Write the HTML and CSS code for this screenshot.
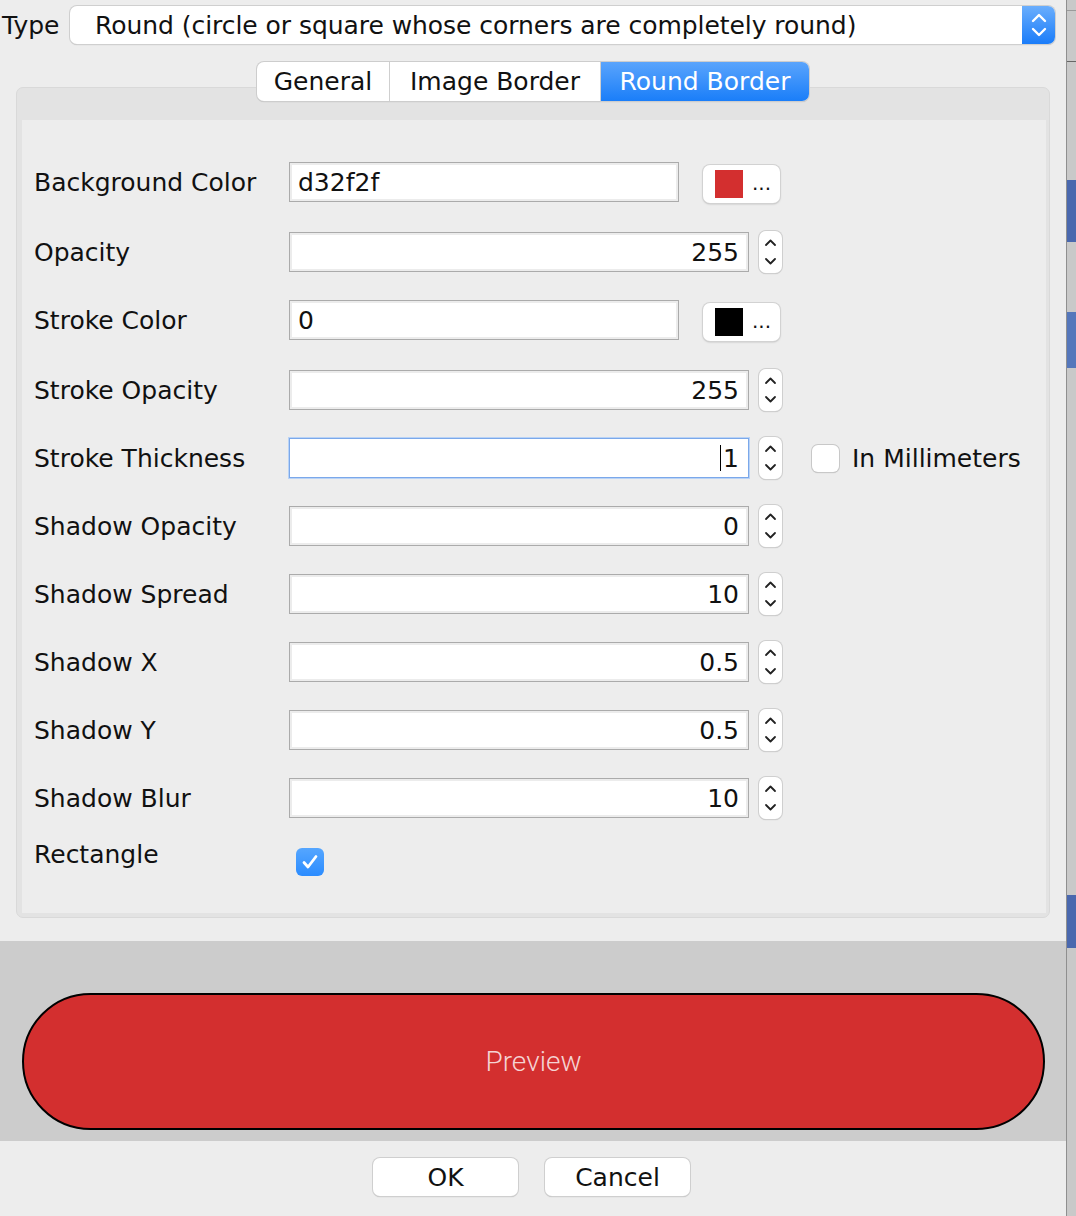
FILE: index.html
```html
<!DOCTYPE html>
<html>
<head>
<meta charset="utf-8">
<link rel="stylesheet" href="styles.css">
</head>
<body>
<div class="screen">
  <div class="dialog">
    <div class="type-row">
      <span class="type-label">Type</span>
      <div class="combo">
        <span class="combo-text">Round (circle or square whose corners are completely round)</span>
        <span class="combo-arrow">
          <svg width="18" height="26" viewBox="0 0 18 26"><path d="M3 9 L9 3 L15 9 M3 17 L9 23 L15 17" fill="none" stroke="#fff" stroke-width="2.4" stroke-linecap="round" stroke-linejoin="round"/></svg>
        </span>
      </div>
    </div>

    <div class="tabs-wrap">
      <div class="tabs">
        <div class="tab">General</div>
        <div class="tab">Image Border</div>
        <div class="tab active">Round Border</div>
      </div>
      <div class="panel">
        <div class="panel-inner">
          <div class="form-row color-row">
            <span class="label">Background Color</span>
            <div class="field short">d32f2f</div>
            <div class="color-btn"><span class="swatch red"></span><span class="dots">...</span></div>
          </div>
          <div class="form-row">
            <span class="label">Opacity</span>
            <div class="field num">255</div>
            <div class="spinner"><svg width="23" height="42" viewBox="0 0 23 42"><path d="M7 14 L11.5 9.5 L16 14 M7 28 L11.5 32.5 L16 28" fill="none" stroke="#222" stroke-width="1.8" stroke-linecap="round" stroke-linejoin="round"/></svg></div>
          </div>
          <div class="form-row color-row">
            <span class="label">Stroke Color</span>
            <div class="field short">0</div>
            <div class="color-btn"><span class="swatch black"></span><span class="dots">...</span></div>
          </div>
          <div class="form-row">
            <span class="label">Stroke Opacity</span>
            <div class="field num">255</div>
            <div class="spinner"><svg width="23" height="42" viewBox="0 0 23 42"><path d="M7 14 L11.5 9.5 L16 14 M7 28 L11.5 32.5 L16 28" fill="none" stroke="#222" stroke-width="1.8" stroke-linecap="round" stroke-linejoin="round"/></svg></div>
          </div>
          <div class="form-row">
            <span class="label">Stroke Thickness</span>
            <div class="field num focused"><span class="caret"></span>1</div>
            <div class="spinner"><svg width="23" height="42" viewBox="0 0 23 42"><path d="M7 14 L11.5 9.5 L16 14 M7 28 L11.5 32.5 L16 28" fill="none" stroke="#222" stroke-width="1.8" stroke-linecap="round" stroke-linejoin="round"/></svg></div>
            <span class="checkbox"></span>
            <span class="check-label">In Millimeters</span>
          </div>
          <div class="form-row">
            <span class="label">Shadow Opacity</span>
            <div class="field num">0</div>
            <div class="spinner"><svg width="23" height="42" viewBox="0 0 23 42"><path d="M7 14 L11.5 9.5 L16 14 M7 28 L11.5 32.5 L16 28" fill="none" stroke="#222" stroke-width="1.8" stroke-linecap="round" stroke-linejoin="round"/></svg></div>
          </div>
          <div class="form-row">
            <span class="label">Shadow Spread</span>
            <div class="field num">10</div>
            <div class="spinner"><svg width="23" height="42" viewBox="0 0 23 42"><path d="M7 14 L11.5 9.5 L16 14 M7 28 L11.5 32.5 L16 28" fill="none" stroke="#222" stroke-width="1.8" stroke-linecap="round" stroke-linejoin="round"/></svg></div>
          </div>
          <div class="form-row">
            <span class="label">Shadow X</span>
            <div class="field num">0.5</div>
            <div class="spinner"><svg width="23" height="42" viewBox="0 0 23 42"><path d="M7 14 L11.5 9.5 L16 14 M7 28 L11.5 32.5 L16 28" fill="none" stroke="#222" stroke-width="1.8" stroke-linecap="round" stroke-linejoin="round"/></svg></div>
          </div>
          <div class="form-row">
            <span class="label">Shadow Y</span>
            <div class="field num">0.5</div>
            <div class="spinner"><svg width="23" height="42" viewBox="0 0 23 42"><path d="M7 14 L11.5 9.5 L16 14 M7 28 L11.5 32.5 L16 28" fill="none" stroke="#222" stroke-width="1.8" stroke-linecap="round" stroke-linejoin="round"/></svg></div>
          </div>
          <div class="form-row">
            <span class="label">Shadow Blur</span>
            <div class="field num">10</div>
            <div class="spinner"><svg width="23" height="42" viewBox="0 0 23 42"><path d="M7 14 L11.5 9.5 L16 14 M7 28 L11.5 32.5 L16 28" fill="none" stroke="#222" stroke-width="1.8" stroke-linecap="round" stroke-linejoin="round"/></svg></div>
          </div>
          <div class="form-row rect-row">
            <span class="label">Rectangle</span>
            <span class="checkbox checked">
              <svg width="28" height="28" viewBox="0 0 28 28"><path d="M8 14.5 L12 19 L20 8.5" fill="none" stroke="#fff" stroke-width="2.8" stroke-linecap="round" stroke-linejoin="round"/></svg>
            </span>
          </div>
        </div>
      </div>
    </div>

    <div class="preview-area">
      <div class="pill">Preview</div>
    </div>

    <div class="buttons">
      <div class="btn">OK</div>
      <div class="btn">Cancel</div>
    </div>
  </div>
  <div class="side">
    <div class="side-line l1"></div>
    <div class="side-line l2"></div>
    <div class="side-blue b1"></div>
    <div class="side-gap g1"></div>
    <div class="side-blue b2"></div>
    <div class="side-gap g2"></div>
    <div class="side-blue b3"></div>
  </div>
</div>
</body>
</html>
```

FILE: styles.css
```css
html, body {
  margin: 0;
  padding: 0;
  background: #ededed;
}
body {
  font-family: "DejaVu Sans", "Liberation Sans", sans-serif;
  font-size: 25px;
  color: #111;
}
.screen {
  display: flex;
  width: 1076px;
  height: 1216px;
  overflow: hidden;
}
.dialog {
  width: 1066px;
  flex: none;
  display: flex;
  flex-direction: column;
  background: #ededed;
}
.side {
  width: 10px;
  flex: none;
  background: #c9c9c9;
  border-left: 1px solid #8f8f8f;
  display: flex;
  flex-direction: column;
}
.side-line { height: 1px; background: #9a9a9a; }
.side-line.l1 { margin-top: 10px; }
.side-line.l2 { margin-top: 50px; background: #666; }
.side-blue { background: #4a68ae; }
.side-blue.b1 { margin-top: 118px; height: 62px; }
.side-gap.g1 { height: 70px; }
.side-blue.b2 { height: 56px; background: #5577bb; }
.side-gap.g2 { height: 527px; }
.side-blue.b3 { height: 53px; }

/* Type row */
.type-row {
  display: flex;
  align-items: center;
  height: 38px;
  margin-top: 6px;
}
.type-label {
  margin-left: 2px;
  width: 68px;
}
.combo {
  width: 985px;
  height: 38px;
  box-sizing: border-box;
  background: #fff;
  border-radius: 7px;
  box-shadow: 0 0 0 1px #cfcfcf, 0 1px 1px #b5b5b5;
  display: flex;
  align-items: center;
  justify-content: space-between;
  overflow: hidden;
}
.combo-text {
  padding-left: 25px;
  letter-spacing: -0.05px;
}
.combo-arrow {
  width: 33px;
  height: 38px;
  background: linear-gradient(#6aaefd, #1a7cf9);
  display: flex;
  align-items: center;
  justify-content: center;
}

/* Tabs */
.tabs-wrap {
  margin: 18px 16px 0 16px;
  display: flex;
  flex-direction: column;
  align-items: center;
}
.tabs {
  display: flex;
  height: 39px;
  margin-bottom: -14px;
  position: relative;
  z-index: 1;
  border-radius: 7px;
  box-shadow: 0 0 0 1px #cdcdcd, 0 1px 1px #b0b0b0;
  background: #fff;
}
.tab {
  display: flex;
  align-items: center;
  justify-content: center;
  height: 39px;
  box-sizing: border-box;
  border-right: 1px solid #cfcfcf;
}
.tab:nth-child(1) { width: 133px; border-radius: 7px 0 0 7px; }
.tab:nth-child(2) { width: 211px; }
.tab.active {
  width: 208px;
  border-right: none;
  background: linear-gradient(#5aa4fc, #1a7ef9);
  color: #fff;
  border-radius: 0 7px 7px 0;
}
.panel {
  align-self: stretch;
  width: 1034px;
  box-sizing: border-box;
  background: #e3e3e3;
  border: 1px solid #d9d9d9;
  border-radius: 7px;
  padding: 32px 3px 4px 5px;
}
.panel-inner {
  background: #ededed;
  padding: 42px 0 20px 12px;
  display: flex;
  flex-direction: column;
  gap: 28px;
}

/* Rows */
.form-row {
  display: flex;
  align-items: center;
  height: 40px;
}
.color-row {
  margin-bottom: 2px;
}
.label {
  width: 255px;
  flex: none;
}
.field {
  height: 40px;
  box-sizing: border-box;
  background: #fff;
  border: 1px solid #ababab;
  box-shadow: inset 0 0 0 2px #ececec;
  display: flex;
  align-items: center;
  padding: 0 9px 0 8px;
  flex: none;
  position: relative;
}
.field.short {
  width: 390px;
}
.field.num {
  width: 460px;
  justify-content: flex-end;
}
.field.focused {
  border: 1px solid #7ba8ea;
  box-shadow: 0 0 0 1px #b9d3f6;
}
.caret {
  display: inline-block;
  width: 1px;
  height: 26px;
  background: #000;
  margin-right: 2px;
}
.color-btn {
  margin-left: 24px;
  width: 77px;
  height: 38px;
  box-sizing: border-box;
  background: #fff;
  border-radius: 7px;
  box-shadow: 0 0 0 1px #d2d2d2, 0 1px 2px #aaa;
  display: flex;
  align-items: center;
  padding-left: 12px;
  margin-top: 3px;
}
.swatch {
  width: 28px;
  height: 28px;
  display: inline-block;
}
.swatch.red { background: #d32f2f; }
.swatch.black { background: #000; }
.dots {
  margin-left: 9px;
  font-size: 20px;
  line-height: 1;
  margin-top: -2px;
  letter-spacing: 0;
}
.spinner {
  margin-left: 10px;
  width: 23px;
  height: 42px;
  box-sizing: border-box;
  background: #fff;
  border-radius: 7px;
  box-shadow: 0 0 0 1px #cfcfcf, 0 1px 1px #b5b5b5;
  display: flex;
  flex: none;
}
.checkbox {
  width: 27px;
  height: 27px;
  box-sizing: border-box;
  background: #fff;
  border-radius: 6px;
  box-shadow: 0 0 0 1px #c8c8c8, 0 1px 1px #b5b5b5;
  margin-left: 30px;
  flex: none;
  display: flex;
}
.check-label {
  margin-left: 13px;
}
.rect-row {
  align-items: flex-start;
  height: 45px;
  margin-top: 2px;
}
.rect-row .label {
  line-height: 30px;
  margin-top: -8px;
}
.checkbox.checked {
  margin-left: 7px;
  margin-top: 0;
  width: 28px;
  height: 28px;
  background: linear-gradient(#55a6ff, #2b8cff);
  box-shadow: none;
}

/* Preview */
.preview-area {
  margin-top: 23px;
  height: 200px;
  background: #cccccc;
  display: flex;
  align-items: flex-start;
  padding: 52px 20px 0 22px;
  box-sizing: border-box;
}
.pill {
  width: 1023px;
  height: 137px;
  box-sizing: border-box;
  background: #d32f2f;
  border: 2px solid #000;
  border-radius: 69px;
  display: flex;
  align-items: center;
  justify-content: center;
  color: #f5d3d3;
  font-family: Roboto, "Liberation Sans", sans-serif;
  font-weight: 300;
  font-size: 28px;
}

/* Buttons */
.buttons {
  display: flex;
  justify-content: center;
  gap: 27px;
  margin-top: 17px;
  padding-right: 3px;
}
.btn {
  width: 145px;
  height: 38px;
  box-sizing: border-box;
  background: #fff;
  border-radius: 7px;
  box-shadow: 0 0 0 1px #cfcfcf, 0 1px 1px #a8a8a8;
  display: flex;
  align-items: center;
  justify-content: center;
}
```
